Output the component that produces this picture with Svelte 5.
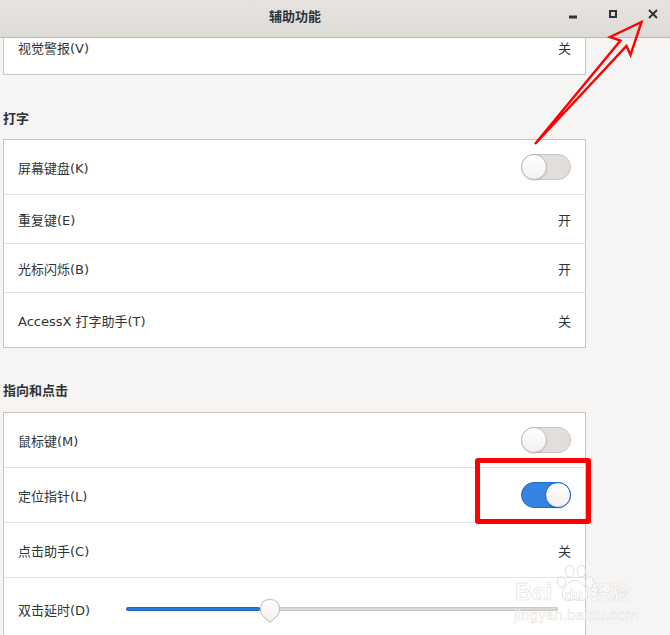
<script>
  const typing = [
    { label: '屏幕键盘(K)', toggle: false, cls: 'tall' },
    { label: '重复键(E)', value: '开' },
    { label: '光标闪烁(B)', value: '开' },
    { label: 'AccessX 打字助手(T)', value: '关', cls: 'tall' }
  ];
  const pointing = [
    { label: '鼠标键(M)', toggle: false, cls: 'tall' },
    { label: '定位指针(L)', toggle: true, cls: 'tall' },
    { label: '点击助手(C)', value: '关', cls: 'tall' }
  ];
</script>

<div class="window">
  <header class="titlebar">
    <span class="title">辅助功能</span>
    <div class="controls">
      <svg width="14" height="14" viewBox="0 0 14 14"><rect x="3" y="8.500" width="8" height="3" fill="#2e3436" /></svg>
      <svg width="14" height="14" viewBox="0 0 14 14"><rect x="4" y="4" width="6" height="6" fill="none" stroke="#2e3436" stroke-width="2" /></svg>
      <svg width="14" height="14" viewBox="0 0 14 14"><path d="M3 3l8 8M11 3l-8 8" fill="none" stroke="#2e3436" stroke-width="2" /></svg>
    </div>
  </header>

  <main class="content">
    <section class="panel first">
      <div class="row top"><span class="text">视觉警报(V)</span><span class="text value">关</span></div>
    </section>

    <h2 class="typing">打字</h2>
    <section class="panel">
      {#each typing as r}
        <div class="row {r.cls ?? ''}">
          <span class="text">{r.label}</span>
          {#if r.value}<span class="text value">{r.value}</span>{:else}<span class="switch" class:on={r.toggle}><i></i></span>{/if}
        </div>
      {/each}
    </section>

    <h2 class="pointing">指向和点击</h2>
    <section class="panel last">
      {#each pointing as r}
        <div class="row {r.cls ?? ''}">
          <span class="text">{r.label}</span>
          {#if r.value}<span class="text value">{r.value}</span>{:else}<span class="switch" class:on={r.toggle}><i></i></span>{/if}
        </div>
      {/each}
      <div class="row slider-row">
        <span class="text delay">双击延时(D)</span>
        <div class="slider">
          <div class="fill"></div>
          <svg class="thumb" width="22" height="26" viewBox="0 0 22 26">
            <defs><linearGradient id="kn" x1="0" y1="0" x2="0" y2="1"><stop offset="0" stop-color="#ffffff" /><stop offset="1" stop-color="#f1efed" /></linearGradient></defs>
            <path d="M11 24.500L3.500 17.500Q1.500 15.500 1.500 11Q1.500 1.500 11 1.500Q20.500 1.500 20.500 11Q20.500 15.500 18.500 17.500Z" fill="url(#kn)" stroke="#bfb8b1" />
          </svg>
        </div>
      </div>
    </section>
  </main>

  <svg class="arrow" width="670" height="160" viewBox="0 0 670 160">
    <path d="M535 144L620.500 40.500L610 37L641.500 22L630.500 55L626.500 46L535 144Z" fill="none" stroke="#ff0000" stroke-width="2.400" stroke-linejoin="miter" />
  </svg>
  <div class="redbox"></div>

  <div class="watermark">
    <svg class="paw" width="40" height="42" viewBox="0 0 44 46" fill="#ffffff" fill-opacity="0.6" stroke="#dedcda" stroke-width="1">
      <ellipse cx="7" cy="22" rx="4.500" ry="6" />
      <ellipse cx="16" cy="10" rx="4.500" ry="6.500" />
      <ellipse cx="29" cy="10" rx="4.500" ry="6.500" />
      <ellipse cx="38" cy="22" rx="4.500" ry="6" />
      <path d="M22 20C15 20 8 30 8 36C8 43 16 43 22 41C28 43 36 43 36 36C36 30 29 20 22 20Z" />
    </svg>
    <div class="wm-main"><span>Bai</span><span class="du">du</span><span class="jy">经验</span></div>
    <div class="wm-sub">jingyan.baidu.com</div>
  </div>
</div>

<style>
  :global(body) { margin: 0; }
  .window {
    position: relative;
    width: 670px;
    height: 635px;
    overflow: hidden;
    background: #f6f5f4;
    color: #2e3436;
    font-family: "DejaVu Sans", "Noto Sans CJK SC", sans-serif;
    font-size: 13px;
  }
  .titlebar {
    position: relative;
    display: flex;
    align-items: center;
    justify-content: center;
    height: 37px;
    padding-right: 80px;
    border-bottom: 1px solid #bfb8b1;
    background: linear-gradient(#e6e3e0, #dedbd7);
  }
  .title {
    margin-top: -7px;
    font-weight: 700;
    font-size: 13px;
    color: #2e3436;
  }
  .controls {
    position: absolute;
    top: 7px;
    right: 10px;
    display: flex;
    gap: 26px;
  }
  .content {
    padding: 0 84px 0 3px;
    display: flex;
    flex-direction: column;
  }
  h2 {
    margin: 0;
    font-size: 13px;
    font-weight: 700;
    line-height: 20px;
    color: #2e3436;
  }
  .typing { margin-top: 34px; margin-bottom: 10px; }
  .pointing { margin-top: 33px; margin-bottom: 11px; }
  .panel {
    border: 1px solid #c9c4bf;
    background: #fff;
  }
  .panel.first { border-top: 0; }
  .panel.last { border-bottom: 0; }
  .row {
    display: flex;
    align-items: center;
    justify-content: space-between;
    height: 48px;
    padding: 0 14px;
    border-top: 1px solid #e6e4e2;
  }
  .row:first-child { border-top: 0; }
  .row.tall { height: 54px; }
  .row.top { height: 36px; align-items: flex-start; padding-top: 2px; box-sizing: border-box; }
  .row.top .text { line-height: 20px; margin-top: -1px; }
  .text.delay { margin-top: 4px; }
  .switch {
    display: flex;
    box-sizing: border-box;
    width: 50px;
    height: 26px;
    border: 1px solid #c9c4bf;
    border-radius: 13px;
    background: #e1dedb;
  }
  .switch i {
    display: block;
    box-sizing: border-box;
    width: 26px;
    height: 26px;
    margin: -1px;
    border: 1px solid #bfb8b1;
    border-radius: 50%;
    background: linear-gradient(#ffffff, #f3f1ef);
    box-shadow: 0 1px 1px rgba(0, 0, 0, 0.1);
  }
  .switch.on {
    justify-content: flex-end;
    background: #3584e4;
    border-color: #1b6acb;
  }
  .switch.on i { border-color: #1b6acb; }
  .slider-row { height: 58px; padding-right: 27px; }
  .slider {
    position: relative;
    width: 432px;
    height: 4px;
    margin-top: 4px;
    border-radius: 2px;
    background: #dbd8d4;
    box-shadow: inset 0 0 0 1px #cdc7c2;
  }
  .fill {
    box-sizing: border-box;
    width: 134px;
    height: 4px;
    border: 1px solid #1b6acb;
    border-radius: 2px;
    background: #2f7ad8;
  }
  .thumb {
    position: absolute;
    left: 133px;
    top: -9px;
  }
  .arrow {
    position: absolute;
    left: 0;
    top: 0;
    pointer-events: none;
  }
  .redbox {
    position: absolute;
    left: 475px;
    top: 458px;
    box-sizing: border-box;
    width: 116px;
    height: 66px;
    border: 5px solid #ff0000;
    border-radius: 3px;
  }
  .watermark {
    position: absolute;
    left: 514px;
    top: 562px;
    width: 124px;
    height: 70px;
    color: #fff;
    font-family: "Liberation Sans", "Noto Sans CJK SC", sans-serif;
  }
  .paw {
    position: absolute;
    left: 41px;
    top: 0;
  }
  .wm-main {
    position: absolute;
    left: 1px;
    top: 16px;
    display: flex;
    align-items: baseline;
    font-size: 24px;
    font-weight: 700;
    line-height: 28px;
    -webkit-text-stroke: 0.5px #dedcda;
  }
  .du { margin-left: 12px; font-size: 15px; }
  .jy { margin-left: 8px; font-size: 19px; }
  .wm-sub {
    position: absolute;
    left: 0;
    top: 44px;
    font-size: 15px;
    letter-spacing: 0.2px;
    line-height: 18px;
    -webkit-text-stroke: 0.4px #dedcda;
  }
</style>
